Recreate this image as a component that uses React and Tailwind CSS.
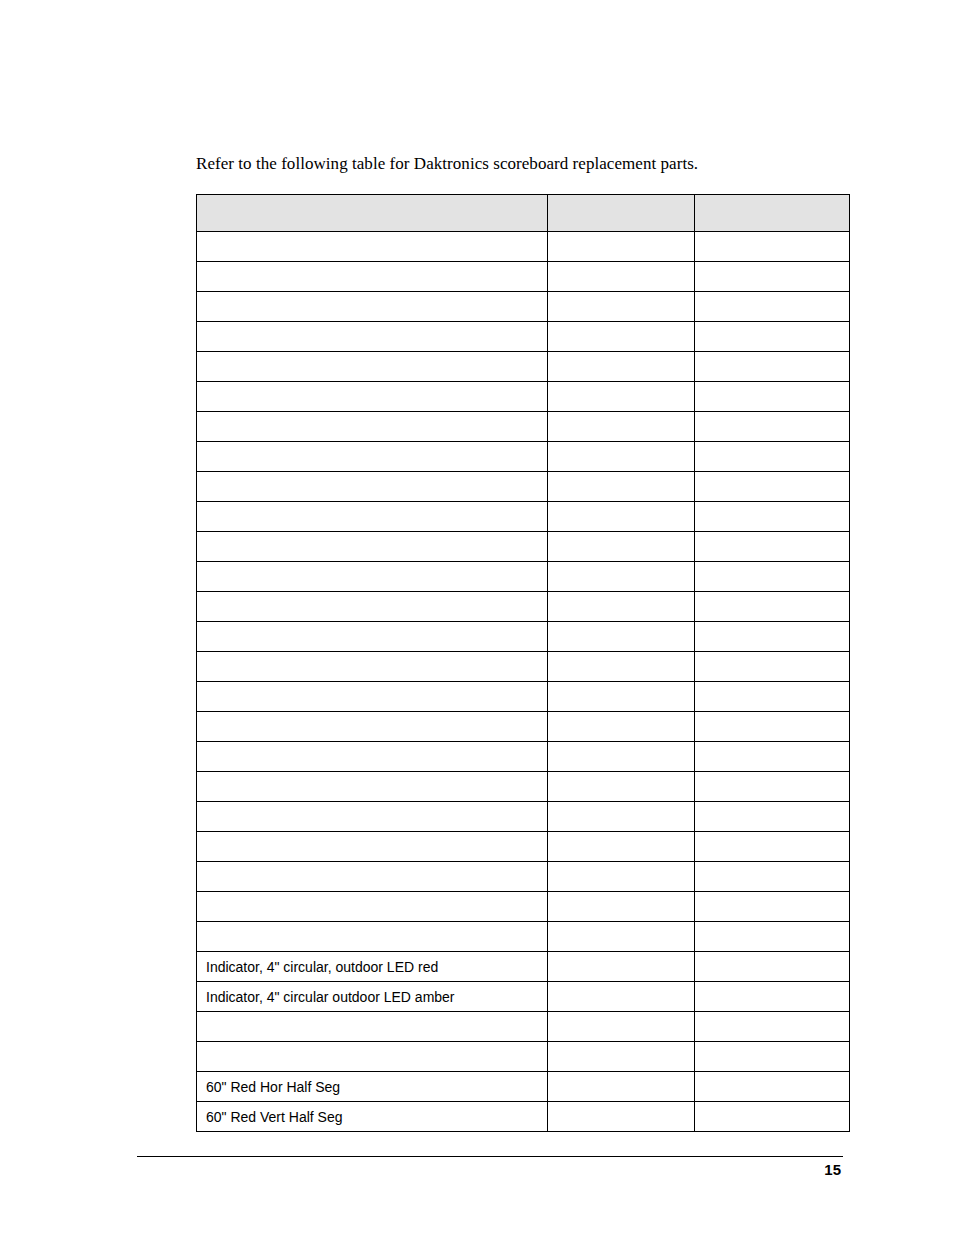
const rows = [
  "", "", "", "", "", "", "", "", "", "", "", "", "", "", "", "", "", "", "", "", "", "", "", "",
  "Indicator, 4\" circular, outdoor LED red",
  "Indicator, 4\" circular outdoor LED amber",
  "",
  "",
  "60\" Red Hor Half Seg",
  "60\" Red Vert Half Seg",
];

function Row({ label, header }) {
  const h = header ? "h-[37px] bg-[#e3e3e3]" : "h-[30px]";
  return (
    <div className={`flex ${h}`}>
      <div className="w-[351px] border-r border-b border-black flex items-center pl-[9px] pt-[2px] text-[14px] text-black">
        {label}
      </div>
      <div className="w-[147px] border-r border-b border-black" />
      <div className="w-[155px] border-r border-b border-black" />
    </div>
  );
}

export default function App() {
  return (
    <div
      className="w-[954px] h-[1235px] bg-white pt-[153px]"
      style={{ fontFamily: "'Liberation Sans', Arial, sans-serif" }}
    >
      <p
        className="pl-[196px] text-[17px] leading-[22px] tracking-[0.05px] text-black"
        style={{ fontFamily: "'Liberation Serif', 'Times New Roman', serif" }}
      >
        Refer to the following table for Daktronics scoreboard replacement parts.
      </p>

      {/* Parts table */}
      <div className="mt-[19px] ml-[196px] w-[654px] border-l border-t border-black">
        <Row header label="" />
        {rows.map((label, i) => (
          <Row key={i} label={label} />
        ))}
      </div>

      {/* Footer */}
      <div className="mt-[24px] ml-[137px] w-[706px] border-t border-black pt-[4px] pr-[2px]">
        <div className="text-right text-[15px] leading-[17px] font-bold text-black">15</div>
      </div>
    </div>
  );
}
